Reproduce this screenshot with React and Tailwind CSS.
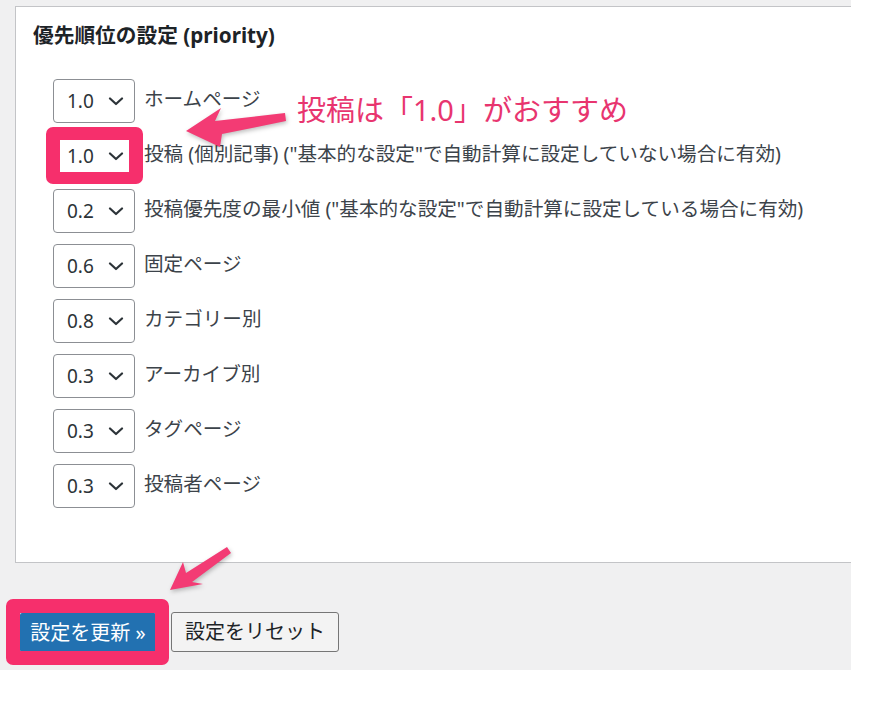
import React from 'react';

const rows = [
  { value: '1.0', label: 'ホームページ' },
  { value: '1.0', label: '投稿 (個別記事) ("基本的な設定"で自動計算に設定していない場合に有効)', marked: true },
  { value: '0.2', label: '投稿優先度の最小値 ("基本的な設定"で自動計算に設定している場合に有効)' },
  { value: '0.6', label: '固定ページ' },
  { value: '0.8', label: 'カテゴリー別' },
  { value: '0.3', label: 'アーカイブ別' },
  { value: '0.3', label: 'タグページ' },
  { value: '0.3', label: '投稿者ページ' },
];

const Chevron = () => (
  <svg width="16" height="9" viewBox="0 0 16 9" fill="none">
    <polyline points="2,1.5 8,7 14,1.5" stroke="#2c3338" strokeWidth="2.2" strokeLinecap="round" strokeLinejoin="round" />
  </svg>
);

const PrioritySelect = ({ value, marked }) => (
  <div className="relative">
    <div className="w-[82px] h-[44px] bg-white border border-[#8c8f94] rounded-[4px] flex items-center justify-between pl-[13px] pr-[10px] text-[19px] text-[#2c3338]">
      <span>{value}</span>
      <Chevron />
    </div>
    {marked && (
      <div className="absolute left-[-7px] right-[-8px] top-[-7px] bottom-[-6px] border-x-[14px] border-t-[13px] border-b-[12px] border-[#f62f6c] rounded-[7px]" />
    )}
  </div>
);

export default function App() {
  return (
    <div className="relative w-[892px] h-[712px] bg-white font-['Noto_Sans','Noto_Sans_CJK_JP',sans-serif] overflow-hidden">
      <div className="w-[851px] h-[670px] bg-[#f0f0f1] pt-[6px] flex flex-col">
        {/* 設定パネル */}
        <div className="ml-[15px] h-[557px] bg-white border border-r-0 border-[#c3c4c7] pt-[14px] pl-[17px]">
          <h2 className="text-[20.7px] leading-[28px] font-bold text-[#1d2327]">優先順位の設定 (priority)</h2>
          <div className="mt-[30px] pl-[20px] flex flex-col gap-[11px]">
            {rows.map((row, i) => (
              <div key={i} className="flex items-center gap-[9px]">
                <PrioritySelect value={row.value} marked={row.marked} />
                <span className="text-[19.6px] leading-[28px] text-[#3c434a] whitespace-nowrap -mt-[4px]">{row.label}</span>
              </div>
            ))}
          </div>
        </div>

        {/* ボタン */}
        <div className="mt-[49px] pl-[20px] flex items-start">
          <div className="relative mt-[1px]">
            <button className="w-[136px] h-[39px] bg-[#2271b1] text-white text-[20px] leading-none rounded-[2px] flex items-center justify-center">
              設定を更新 »
            </button>
            <div className="absolute left-[-14px] right-[-13px] top-[-14px] bottom-[-13px] border-[14px] border-[#f62f6c] rounded-[7px]" />
          </div>
          <button className="ml-[15px] w-[168px] h-[40px] bg-[#f3f3f3] border-[1.5px] border-[#767676] rounded-[3px] text-[20px] leading-none text-[#1d2327] flex items-center justify-center">
            設定をリセット
          </button>
        </div>
      </div>

      {/* 注釈 */}
      <div className="absolute left-[297px] top-[90px] text-[29px] leading-[40px] text-[#e8356f] whitespace-nowrap">
        投稿は「1.0」がおすすめ
      </div>
      <svg className="absolute left-0 top-0 pointer-events-none drop-shadow-[1px_2px_2px_rgba(0,0,0,0.25)]" width="892" height="712" viewBox="0 0 892 712">
        <polygon points="186,131 221,108 215,121 285,113 286,121 222,134 220,147" fill="#f33b74" />
        <polygon points="170,590 183,562 186,573 227,547 231,553 192,582 203,584" fill="#f33b74" />
      </svg>
    </div>
  );
}
